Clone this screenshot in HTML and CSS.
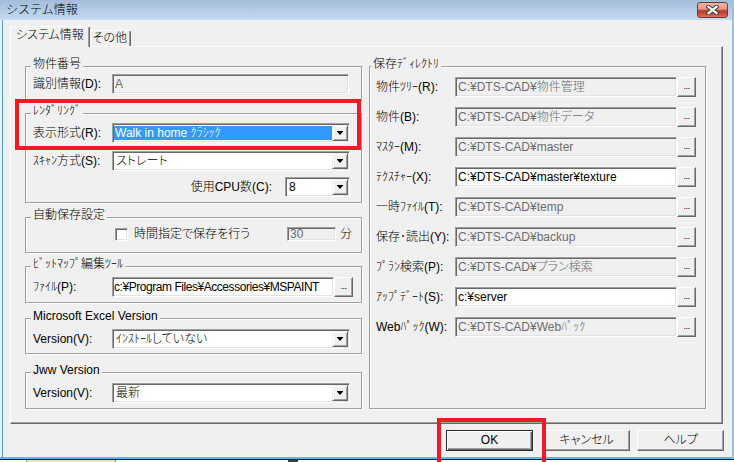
FILE: index.html
```html
<!DOCTYPE html>
<html lang="ja">
<head>
  <meta charset="UTF-8">
  <title>システム情報</title>
  <link rel="stylesheet" href="styles.css">
</head>
<body>
  <div class="window">
    <div class="titlebar">
      <span class="title">システム情報</span>
      <span class="close-btn">
        <svg width="13" height="10" viewBox="0 0 13 10">
          <path d="M2.5 1.8 L10.5 8.2 M10.5 1.8 L2.5 8.2" stroke="#3a3a3a" stroke-width="4.2" stroke-linecap="square"/>
          <path d="M2.5 1.8 L10.5 8.2 M10.5 1.8 L2.5 8.2" stroke="#fff" stroke-width="2.2" stroke-linecap="square"/>
        </svg>
      </span>
    </div>
    <div class="client">
      <div class="tabs">
        <div class="tab active">システム情報</div>
        <div class="tab">その他</div>
      </div>
      <div class="panel">
        <!-- left column -->
        <div class="column">
          <div class="group g-id">
            <div class="group-title">物件番号</div>
            <div class="row">
              <span class="label">識別情報(D):</span>
              <span class="field off field-id">A</span>
            </div>
          </div>
          <div class="group g-render">
            <div class="group-title">ﾚﾝﾀﾞﾘﾝｸﾞ</div>
            <div class="row row-mode">
              <span class="label">表示形式(R):</span>
              <span class="combo"><span class="combo-text selected">Walk in home ｸﾗｼｯｸ</span><span class="combo-btn"></span></span>
            </div>
            <div class="row row-scan">
              <span class="label">ｽｷｬﾝ方式(S):</span>
              <span class="combo"><span class="combo-text">ストレート</span><span class="combo-btn"></span></span>
            </div>
            <div class="row row-cpu">
              <span class="label label-cpu">使用CPU数(C):</span>
              <span class="combo combo-cpu"><span class="combo-text">8</span><span class="combo-btn"></span></span>
            </div>
          </div>
          <div class="group g-auto">
            <div class="group-title">自動保存設定</div>
            <div class="row row-auto">
              <span class="check"></span>
              <span class="check-label">時間指定で保存を行う</span>
              <span class="field off field-min">30</span>
              <span class="unit">分</span>
            </div>
          </div>
          <div class="group g-bmp">
            <div class="group-title">ﾋﾞｯﾄﾏｯﾌﾟ編集ﾂｰﾙ</div>
            <div class="row">
              <span class="label">ﾌｧｲﾙ(P):</span>
              <span class="field field-path field-bmp">c:¥Program Files¥Accessories¥MSPAINT</span>
              <span class="browse">...</span>
            </div>
          </div>
          <div class="group g-excel">
            <div class="group-title">Microsoft Excel Version</div>
            <div class="row">
              <span class="label">Version(V):</span>
              <span class="combo"><span class="combo-text">ｲﾝｽﾄｰﾙしていない</span><span class="combo-btn"></span></span>
            </div>
          </div>
          <div class="group g-jww">
            <div class="group-title">Jww Version</div>
            <div class="row">
              <span class="label">Version(V):</span>
              <span class="combo"><span class="combo-text">最新</span><span class="combo-btn"></span></span>
            </div>
          </div>
        </div>
        <!-- right column -->
        <div class="column">
          <div class="group g-dir">
            <div class="group-title">保存ﾃﾞｨﾚｸﾄﾘ</div>
            <div class="row">
              <span class="label">物件ﾂﾘｰ(R):</span>
              <span class="field off field-path">C:¥DTS-CAD¥物件管理</span>
              <span class="browse">...</span>
            </div>
            <div class="row">
              <span class="label">物件(B):</span>
              <span class="field off field-path">C:¥DTS-CAD¥物件データ</span>
              <span class="browse">...</span>
            </div>
            <div class="row">
              <span class="label">ﾏｽﾀｰ(M):</span>
              <span class="field off field-path">C:¥DTS-CAD¥master</span>
              <span class="browse">...</span>
            </div>
            <div class="row">
              <span class="label">ﾃｸｽﾁｬｰ(X):</span>
              <span class="field field-path">C:¥DTS-CAD¥master¥texture</span>
              <span class="browse">...</span>
            </div>
            <div class="row">
              <span class="label">一時ﾌｧｲﾙ(T):</span>
              <span class="field off field-path">C:¥DTS-CAD¥temp</span>
              <span class="browse">...</span>
            </div>
            <div class="row">
              <span class="label">保存･読出(Y):</span>
              <span class="field off field-path">C:¥DTS-CAD¥backup</span>
              <span class="browse">...</span>
            </div>
            <div class="row">
              <span class="label">ﾌﾟﾗﾝ検索(P):</span>
              <span class="field off field-path">C:¥DTS-CAD¥プラン検索</span>
              <span class="browse">...</span>
            </div>
            <div class="row">
              <span class="label">ｱｯﾌﾟﾃﾞｰﾄ(S):</span>
              <span class="field field-path">c:¥server</span>
              <span class="browse">...</span>
            </div>
            <div class="row">
              <span class="label">Webﾊﾟｯｸ(W):</span>
              <span class="field off field-path">C:¥DTS-CAD¥Webﾊﾟｯｸ</span>
              <span class="browse">...</span>
            </div>
          </div>
        </div>
      </div>
      <div class="buttons">
        <div class="btn default">OK</div>
        <div class="btn">キャンセル</div>
        <div class="btn">ヘルプ</div>
      </div>
    </div>
    <!-- red annotation frames -->
    <div class="mark mark-render"></div>
    <div class="mark mark-ok"></div>
  </div>
  <div class="desk"></div>
</body>
</html>
```

FILE: styles.css
```css
* {
  box-sizing: border-box;
}
body {
  margin: 0;
  width: 734px;
  height: 462px;
  overflow: hidden;
  background: #d9b792;
  font-family: "Liberation Sans", "Noto Sans CJK JP", sans-serif;
  font-size: 12px;
  font-weight: 300;
  color: #000;
  font-feature-settings: "palt";
}
.window {
  position: relative;
  width: 733px;
  height: 459px;
  background: #f0f0f0;
  border-right: 1px solid #8cc2ea;
  border-bottom: 2px solid #48bff0;
}
.titlebar {
  display: flex;
  align-items: flex-start;
  height: 20px;
  padding-left: 6px;
  background: linear-gradient(#a2bcd9, #c6dbf0);
}
.title {
  line-height: 20px;
  font-feature-settings: normal;
}
.close-btn {
  display: flex;
  align-items: center;
  justify-content: center;
  width: 31px;
  height: 16px;
  margin: 2px 4px 0 auto;
  border: 1px solid #6e3c37;
  border-radius: 3px;
  background: linear-gradient(#ebb3a7, #e2968a 45%, #c5462f 50%, #c3432e 72%, #d9735f);
}
.client {
  height: 437px;
  margin-left: 2px;
  border-left: 1px solid #4f9fd6;
  padding: 0 8px 0 7px;
}
.tabs {
  display: flex;
  align-items: flex-end;
  height: 26px;
}
.tab {
  height: 16px;
  padding: 0 3px 0 2px;
  border: 1px solid;
  border-color: #fff #696969 transparent #fff;
  border-bottom: none;
  border-radius: 2px 2px 0 0;
  box-shadow: inset -1px 0 0 #a0a0a0;
  background: #f0f0f0;
  line-height: 14px;
  white-space: nowrap;
}
.tab.active {
  position: relative;
  z-index: 1;
  height: 21px;
  margin-bottom: -1px;
  padding: 0 5px;
  line-height: 16px;
}
.panel {
  display: flex;
  gap: 7px;
  width: 713px;
  height: 378px;
  padding: 19px 0 0 14px;
  border: 1px solid;
  border-color: #fff #696969 #696969 #fff;
  box-shadow: inset -1px -1px 0 #a0a0a0;
}
.column {
  display: flex;
  flex-direction: column;
  width: 337px;
}
.group {
  flex: none;
  padding: 0 7px;
  border: 1px solid #a0a0a0;
  box-shadow: inset 1px 1px 0 #fff, 1px 1px 0 #fff;
}
.group-title {
  width: max-content;
  height: 14px;
  margin: -10px 0 0 -2px;
  padding: 0 2px;
  background: #f0f0f0;
  line-height: 14px;
  white-space: nowrap;
}
.g-id { height: 35px; }
.g-render { height: 90px; margin-top: 12px; }
.g-auto { height: 36px; margin-top: 14px; }
.g-bmp { height: 37px; margin-top: 13px; }
.g-excel { height: 36px; margin-top: 15px; }
.g-jww { height: 37px; margin-top: 18px; }
.g-dir {
  height: 343px;
  padding-left: 6px;
}
.g-dir .group-title {
  margin-left: -5px;
}
.row {
  display: flex;
  align-items: center;
  height: 20px;
  margin-top: 6px;
}
.g-dir .row + .row { margin-top: 10px; }
.g-id .row { margin-top: 3px; }
.g-render .row-mode { margin-top: 5px; }
.g-render .row-scan { margin-top: 8px; }
.g-render .row-cpu {
  margin-top: 6px;
  justify-content: flex-end;
  padding-right: 4px;
}
.g-auto .row-auto {
  height: 14px;
  margin-top: 5px;
}
.label {
  flex: none;
  width: 79px;
  line-height: 20px;
  white-space: nowrap;
}
.label-cpu {
  width: auto;
  margin-right: 13px;
}
.field {
  flex: none;
  height: 20px;
  padding: 1px 2px;
  border: 1px solid;
  border-color: #a0a0a0 #fff #fff #a0a0a0;
  box-shadow: inset 1px 1px 0 #696969, inset -1px -1px 0 #e3e3e3;
  background: #fff;
  line-height: 16px;
  white-space: nowrap;
  overflow: hidden;
}
.field.off {
  background: #f0f0f0;
  color: #6d6d6d;
}
.field-id { width: 237px; }
.field-path { width: 222px; }
.field-bmp {
  padding: 1px 1px;
  letter-spacing: -0.45px;
}
.field-min {
  width: 49px;
  height: 14px;
  margin-left: auto;
  padding: 0 2px;
  line-height: 12px;
  overflow: visible;
}
.unit {
  margin: 0 2px 0 4px;
  line-height: 14px;
}
.check {
  flex: none;
  width: 13px;
  height: 13px;
  margin-left: 82px;
  border: 1px solid;
  border-color: #a0a0a0 #fff #fff #a0a0a0;
  box-shadow: inset 1px 1px 0 #696969, inset -1px -1px 0 #e3e3e3;
  background: #fff;
}
.check-label {
  margin-left: 6px;
  line-height: 14px;
  white-space: nowrap;
}
.browse {
  flex: none;
  display: flex;
  align-items: flex-end;
  justify-content: center;
  width: 19px;
  height: 20px;
  padding-bottom: 5px;
  border: 1px solid;
  border-color: #fff #696969 #696969 #fff;
  box-shadow: inset -1px -1px 0 #a0a0a0;
  background: #f0f0f0;
  font: 9px/9px "Liberation Sans", sans-serif;
  letter-spacing: -0.5px;
}
.combo {
  flex: none;
  display: flex;
  width: 238px;
  height: 20px;
  padding: 1px;
  border: 1px solid;
  border-color: #a0a0a0 #fff #fff #a0a0a0;
  box-shadow: inset 1px 1px 0 #696969, inset -1px -1px 0 #e3e3e3;
  background: #fff;
}
.combo-cpu { width: 65px; }
.combo-text {
  flex: 1;
  padding: 0 2px;
  line-height: 16px;
  white-space: nowrap;
  overflow: hidden;
}
.combo-text.selected {
  margin: 1px 0;
  padding: 0 1px;
  line-height: 14px;
  background: #3399ff;
  color: #fff;
}
.combo-btn {
  flex: none;
  display: flex;
  align-items: center;
  justify-content: center;
  width: 16px;
  height: 16px;
  border: 1px solid;
  border-color: #f0f0f0 #696969 #696969 #f0f0f0;
  box-shadow: inset 1px 1px 0 #fff, inset -1px -1px 0 #a0a0a0;
  background: #f0f0f0;
}
.combo-btn::before {
  content: "";
  width: 7px;
  height: 4px;
  background: #000;
  clip-path: polygon(0 0, 100% 0, 50% 100%);
}
.buttons {
  display: flex;
  justify-content: flex-end;
  margin-top: 6px;
}
.btn {
  width: 87px;
  height: 21px;
  border: 1px solid;
  border-color: #fff #696969 #696969 #fff;
  box-shadow: inset -1px -1px 0 #a0a0a0;
  background: #f0f0f0;
  text-align: center;
  line-height: 19px;
}
.btn + .btn {
  margin-left: 7px;
}
.btn.default {
  margin-right: 3px;
  border-color: #2a2a2a;
  box-shadow: inset 1px 1px 0 #fff, inset -1px -1px 0 #696969, inset -2px -2px 0 #a0a0a0;
}
.mark {
  position: absolute;
  border: 4px solid #ed1c24;
}
.mark-render {
  left: 15px;
  top: 99px;
  width: 346px;
  height: 51px;
}
.mark-ok {
  left: 437px;
  top: 418px;
  width: 109px;
  height: 50px;
}
.desk {
  height: 3px;
  border-top: 1px solid #1f1f1f;
  background: linear-gradient(to right, #fff 0 26px, #9a9a9a 26px 27px, #f8dcc0 27px 115px, #8a8a8a 115px 116px, #fff 116px 288px, #404040 288px 298px, #fff 298px);
}
```
